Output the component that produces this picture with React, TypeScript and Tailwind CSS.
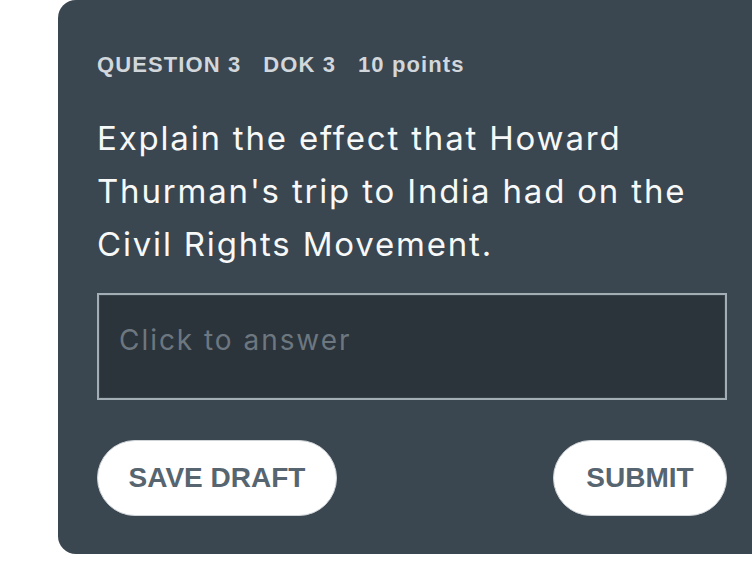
export default function App() {
  return (
    <div className="w-[752px] h-[561px] overflow-hidden bg-white">
      <div className="ml-[58px] w-[720px] rounded-l-[18px] bg-[#3a4650] pl-[39px] pt-[52px] pb-[38px]">
        <div className="w-[630px]">
          <div
            className="flex gap-[22px] text-[22px] leading-[26px] font-bold tracking-[0.05em] text-[#d2d7db]"
            style={{ fontFamily: '"Liberation Sans", Arial, sans-serif' }}
          >
            <span>QUESTION 3</span>
            <span>DOK 3</span>
            <span>10 points</span>
          </div>
          <p
            className="mt-[34px] text-[33px] leading-[53px] tracking-[0.055em] text-[#f7f8f8]"
            style={{ fontFamily: 'Inter, "Noto Sans", sans-serif' }}
          >
            Explain the effect that Howard
            <br />
            Thurman's trip to India had on the
            <br />
            Civil Rights Movement.
          </p>
          <div className="mt-[22px] h-[107px] border-2 border-[#a3adb4] bg-[#2b333b] shadow-[inset_0_0_0_1px_#37414a] pl-[20px] pt-[28px]">
            <div
              className="text-[28px] leading-[34px] tracking-[0.07em] text-[#6d777f]"
              style={{ fontFamily: 'Inter, "Noto Sans", sans-serif' }}
            >
              Click to answer
            </div>
          </div>
          <div
            className="mt-[40px] flex justify-between"
            style={{ fontFamily: '"Liberation Sans", Arial, sans-serif' }}
          >
            <button className="h-[76px] w-[240px] rounded-full border border-[#cfd4d8] bg-white text-[28px] font-bold text-[#56656f]">
              SAVE DRAFT
            </button>
            <button className="h-[76px] w-[174px] rounded-full border border-[#cfd4d8] bg-white text-[28px] font-bold text-[#56656f]">
              SUBMIT
            </button>
          </div>
        </div>
      </div>
    </div>
  );
}
